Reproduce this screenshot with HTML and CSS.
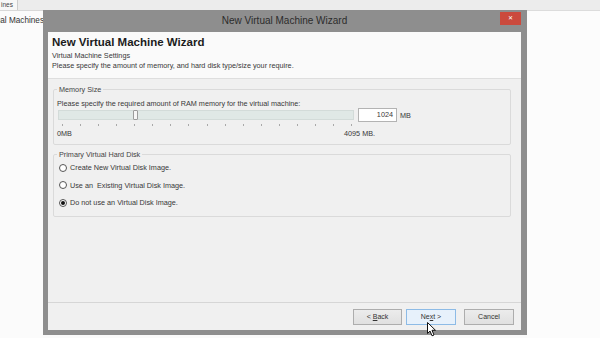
FILE: index.html
```html
<!DOCTYPE html>
<html>
<head>
<meta charset="utf-8">
<link rel="stylesheet" href="styles.css">
</head>
<body>
<div class="screen">
  <div class="topstrip"><div class="tab">ines</div><div class="stripfill"></div></div>
  <div class="main">
    <div class="leftcol">
      <div class="treehead"><span>Virtual Machines</span></div>
    </div>
    <div class="window">
      <div class="titlebar">
        <div class="tb-left"></div>
        <div class="title">New Virtual Machine Wizard</div>
        <div class="tb-right"><div class="close">&#x2715;</div></div>
      </div>
      <div class="client">
        <div class="header">
          <h1>New Virtual Machine Wizard</h1>
          <p class="sub sub1">Virtual Machine Settings</p>
          <p class="sub">Please specify the amount of memory, and hard disk type/size your require.</p>
        </div>
        <div class="body">
          <fieldset class="group mem">
            <legend>Memory Size</legend>
            <div class="prompt">Please specify the required amount of RAM memory for the virtual machine:</div>
            <div class="slider-row">
              <div class="track"><div class="thumb" style="left:74px"></div></div>
              <div class="num">1024</div>
              <div class="unit">MB</div>
            </div>
            <div class="ticks">
              <span></span><span></span><span></span><span></span><span></span><span></span><span></span><span></span><span></span><span></span><span></span><span></span><span></span><span></span><span></span><span></span><span></span>
            </div>
            <div class="scale"><span class="min">0MB</span><span class="max">4095 MB.</span></div>
          </fieldset>
          <fieldset class="group disk">
            <legend>Primary Virtual Hard Disk</legend>
            <div class="radio"><span class="dot"></span><span>Create New Virtual Disk Image.</span></div>
            <div class="radio"><span class="dot"></span><span>Use an&nbsp; Existing Virtual Disk Image.</span></div>
            <div class="radio"><span class="dot on"><span class="pip"></span></span><span>Do not use an Virtual Disk Image.</span></div>
          </fieldset>
        </div>
        <div class="footer">
          <div class="btn back">&lt; <u>B</u>ack</div>
          <div class="btn next default">
            <span>Ne<u>x</u>t &gt;</span>
            <svg class="cursor" width="10" height="15" viewBox="0 0 10 15"><path d="M0.5 0.5 L0.5 11.5 L3 9 L5 13.8 L7 13 L5 8.3 L8.5 8.3 Z" fill="#fff" stroke="#111" stroke-width="1" stroke-linejoin="round"/></svg>
          </div>
          <div class="btn cancel">Cancel</div>
        </div>
      </div>
    </div>
    <div class="rightcol"></div>
  </div>
</div>
</body>
</html>
```
FILE: styles.css
```css
* { box-sizing: border-box; }
html, body { margin: 0; padding: 0; }
body {
  width: 600px;
  height: 338px;
  overflow: hidden;
  background: #fafafa;
  font-family: "Liberation Sans", Arial, sans-serif;
  font-size: 7.25px;
  color: #383838;
}
.screen { display: flex; flex-direction: column; height: 338px; }

.topstrip { height: 10px; display: flex; background: #ececec; }
.tab {
  width: 18px;
  background: #f7f7f7;
  border-right: 1px solid #cdcdcd;
  font-size: 6.5px;
  line-height: 10px;
  color: #444;
  white-space: nowrap;
  overflow: hidden;
  display: flex;
  justify-content: flex-end;
  padding-right: 4px;
}
.stripfill { flex: 1; }

.main { flex: 1; display: flex; align-items: flex-start; }
.leftcol {
  width: 43px;
  align-self: stretch;
  border-top: 1px solid #d8d8d8;
  background: #fbfbfb;
  overflow: hidden;
}
.treehead {
  height: 19px;
  display: flex;
  justify-content: flex-end;
  align-items: center;
  white-space: nowrap;
  font-size: 8.2px;
  color: #333;
  margin-right: -1px;
}
.rightcol {
  flex: 1;
  align-self: stretch;
  border-top: 1px solid #dcdcdc;
  background: #fcfcfc;
}

.window {
  width: 484px;
  height: 325px;
  flex-shrink: 0;
  background: #8e8e8e;
  padding: 0 6px 5px 5px;
  display: flex;
  flex-direction: column;
}
.titlebar {
  height: 22px;
  display: grid;
  grid-template-columns: 1fr auto 1fr;
}
.title {
  font-size: 10px;
  line-height: 22px;
  color: #2c2c2c;
  white-space: nowrap;
}
.tb-right { display: flex; justify-content: flex-end; align-items: flex-start; }
.close {
  margin-top: 2px;
  width: 21px;
  height: 13px;
  background: #cb4a3d;
  color: #fff;
  font-size: 6px;
  line-height: 13px;
  text-align: center;
}

.client {
  flex: 1;
  background: #f0f0f0;
  display: flex;
  flex-direction: column;
}
.header {
  height: 47px;
  background: #fafafa;
  border-bottom: 1px solid #dedede;
  padding: 3px 4px 0;
}
.header h1 {
  margin: 0;
  font-size: 11.5px;
  line-height: 14px;
  font-weight: bold;
  color: #1c1c1c;
}
.sub { margin: 0; line-height: 9.5px; }
.sub1 { margin-top: 2px; }

.body { flex: 1; padding: 6px 10px 0 5px; }
.group {
  margin: 0;
  padding: 0 4px 5px 3px;
  border: 1px solid #dadada;
  border-radius: 2px;
  min-width: 0;
}
.group legend {
  padding: 0 2px;
  line-height: 9px;
  color: #444;
}
.prompt { margin-top: 5px; line-height: 9px; }
.slider-row { display: flex; align-items: center; height: 14px; }
.track {
  position: relative;
  margin-left: 1px;
  width: 296px;
  height: 10px;
  background: #e0e8e6;
  border: 1px solid #d3dbd9;
}
.thumb {
  position: absolute;
  top: -1px;
  width: 5px;
  height: 10px;
  background: #f6f6f6;
  border: 1px solid #9c9c9c;
  border-radius: 1px;
}
.num {
  margin-left: 4px;
  width: 39px;
  height: 14px;
  background: #fff;
  border: 1px solid #b3b3b3;
  text-align: right;
  padding-right: 3px;
  line-height: 12px;
}
.unit { margin-left: 3px; }
.ticks {
  display: flex;
  justify-content: space-between;
  width: 290px;
  margin-left: 5px;
  margin-top: 2px;
  height: 2px;
}
.ticks span { width: 1px; height: 2px; background: #a9a9a9; }
.scale { display: flex; margin-top: 3px; line-height: 10px; }
.scale .min { width: 287px; }

.disk { margin-top: 5px; padding-bottom: 4px; }
.radio {
  display: flex;
  align-items: center;
  height: 17.5px;
  padding-left: 2px;
}
.dot {
  width: 8px;
  height: 8px;
  border: 1px solid #555;
  border-radius: 50%;
  background: #fff;
  margin-right: 3px;
  display: grid;
  place-items: center;
}
.pip { width: 4px; height: 4px; border-radius: 50%; background: #111; }

.footer {
  height: 28px;
  border-top: 1px solid #d6d6d6;
  padding: 6px 7px 5px;
  display: flex;
  justify-content: flex-end;
}
.btn {
  height: 16px;
  width: 50px;
  border: 1px solid #adadad;
  background: linear-gradient(#ececec, #e0e0e0);
  font-size: 7px;
  line-height: 14px;
  text-align: center;
  color: #333;
}
.back { width: 49px; margin-right: 4px; }
.next { margin-right: 8px; position: relative; }
.default { border-color: #8dbbe6; background: #e7f1fb; }
.cursor { position: absolute; left: 20px; top: 12px; }
```
